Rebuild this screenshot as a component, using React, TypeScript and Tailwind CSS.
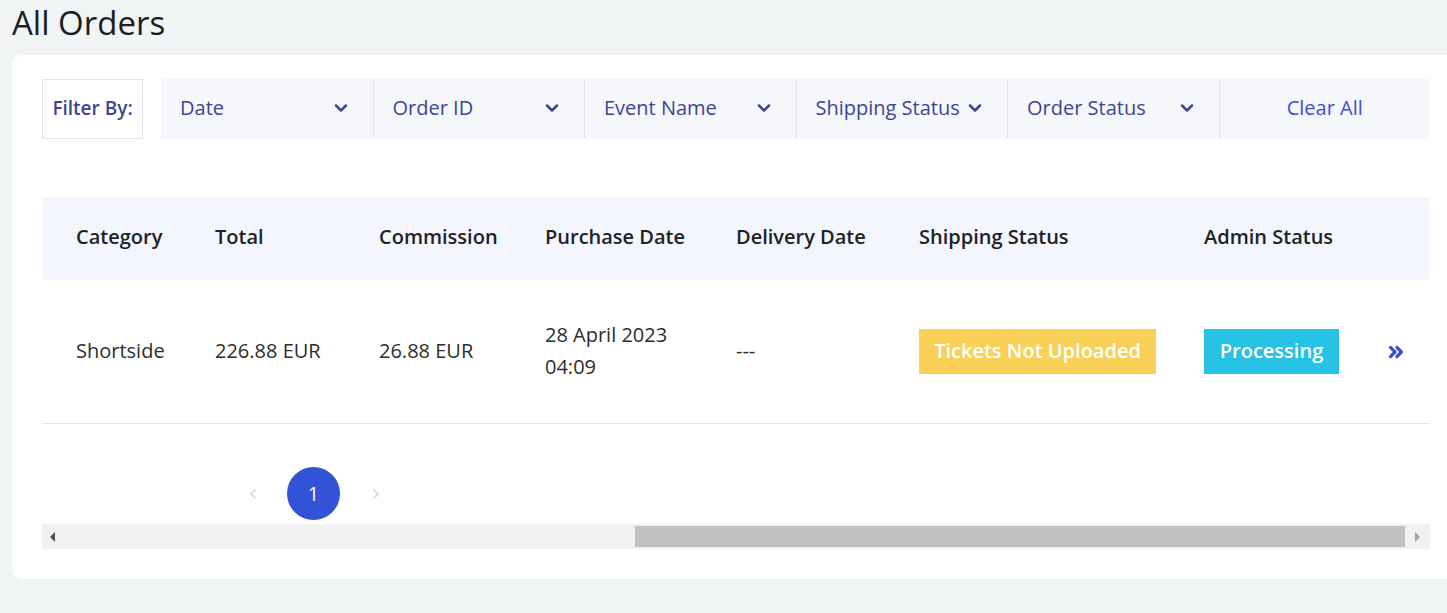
import { ChevronDown, ChevronLeft, ChevronRight, ChevronsRight } from 'lucide-react';

const filters = ['Date', 'Order ID', 'Event Name', 'Shipping Status', 'Order Status'];

const cols = [
  { label: 'Category', w: 'w-[173px] pl-[34px]' },
  { label: 'Total', w: 'w-[164px]' },
  { label: 'Commission', w: 'w-[166px]' },
  { label: 'Purchase Date', w: 'w-[191px]' },
  { label: 'Delivery Date', w: 'w-[183px]' },
  { label: 'Shipping Status', w: 'w-[285px]' },
  { label: 'Admin Status', w: 'w-[183px]' },
];

export default function App() {
  return (
    <div
      className="w-full h-[613px] overflow-hidden bg-[#f1f4f5] text-[#212529]"
      style={{ fontFamily: '"Open Sans", Lato, sans-serif' }}
    >
      <h1 className="pl-3 h-[55px] text-[33px] leading-[45px] text-[#1d1d1f]">All Orders</h1>

      <div className="ml-3 w-[1450px] rounded-[10px] bg-white pl-[30px] pt-6 pb-[30px]">
        <div className="w-[1388px]">
          {/* filters */}
          <div className="flex h-[60px]">
            <div className="w-[101px] flex items-center justify-center border border-[#e3e6ec] pb-[2px] text-[19px] font-semibold text-[#3d4594]">
              Filter By:
            </div>
            <div className="ml-[18px] grid flex-1 grid-cols-6 bg-[#f5f7fa]">
              {filters.map((f, i) => (
                <div
                  key={f}
                  className={`flex items-center justify-between gap-1 pb-[3px] pl-[19px] pr-[22px] text-[20px] text-[#3d4594] ${
                    i > 0 ? 'border-l border-[#e4e7ed]' : ''
                  }`}
                >
                  <span className="whitespace-nowrap">{f}</span>
                  <ChevronDown size={20} strokeWidth={3} className="shrink-0" />
                </div>
              ))}
              <div className="flex items-center justify-center border-l border-[#e4e7ed] pb-[2px] text-[20px] text-[#3a4fd2]">
                Clear All
              </div>
            </div>
          </div>

          {/* table */}
          <div className="mt-[58px]">
            <div className="flex h-[83px] items-center bg-[#f3f6fe] pb-1 text-[20px] font-semibold text-[#222]">
              {cols.map(c => (
                <div key={c.label} className={`${c.w} shrink-0 whitespace-nowrap`}>
                  {c.label}
                </div>
              ))}
            </div>
            <div className="flex h-[144px] items-center border-b border-[#e6e4f4] text-[20px] text-[#2d2d2d]">
              <div className="w-[173px] pl-[34px] pb-[2px] shrink-0">Shortside</div>
              <div className="w-[164px] pb-[2px] shrink-0">226.88 EUR</div>
              <div className="w-[166px] pb-[2px] shrink-0">26.88 EUR</div>
              <div className="w-[191px] pb-[2px] shrink-0 leading-8">
                28 April 2023
                <br />
                04:09
              </div>
              <div className="w-[183px] pb-[2px] shrink-0">---</div>
              <div className="w-[285px] shrink-0">
                <span className="inline-flex h-[45px] w-[237px] items-center justify-center bg-[#f8d156] pb-[2px] font-semibold text-white">
                  Tickets Not Uploaded
                </span>
              </div>
              <div className="w-[183px] shrink-0">
                <span className="inline-flex h-[45px] w-[135px] items-center justify-center bg-[#27c3e4] pb-[2px] font-semibold text-white">
                  Processing
                </span>
              </div>
              <div className="shrink-0">
                <ChevronsRight size={22} strokeWidth={3.5} className="-ml-[2px] text-[#3a4fd2]" />
              </div>
            </div>

            {/* pagination */}
            <div className="mt-[43px] flex h-[53px] items-center pl-[203px]">
              <ChevronLeft size={16} strokeWidth={3} className="text-[#dcdde2]" />
              <div className="ml-[26px] flex h-[53px] w-[53px] items-center justify-center rounded-full bg-[#3253d6] text-[20px] text-white">
                1
              </div>
              <ChevronRight size={16} strokeWidth={3} className="ml-[28px] text-[#dcdde2]" />
            </div>

            {/* scrollbar */}
            <div className="mt-1 flex h-[25px] items-center bg-[#f1f1f1]">
              <div className="flex w-[20px] justify-center">
                <div className="h-0 w-0 border-y-[5px] border-r-[5px] border-y-transparent border-r-[#505050]" />
              </div>
              <div className="ml-[573px] h-[21px] w-[770px] bg-[#c1c1c1]" />
              <div className="flex flex-1 justify-center">
                <div className="h-0 w-0 border-y-[5px] border-l-[5px] border-y-transparent border-l-[#a3a3a3]" />
              </div>
            </div>
          </div>
        </div>
      </div>
    </div>
  );
}
